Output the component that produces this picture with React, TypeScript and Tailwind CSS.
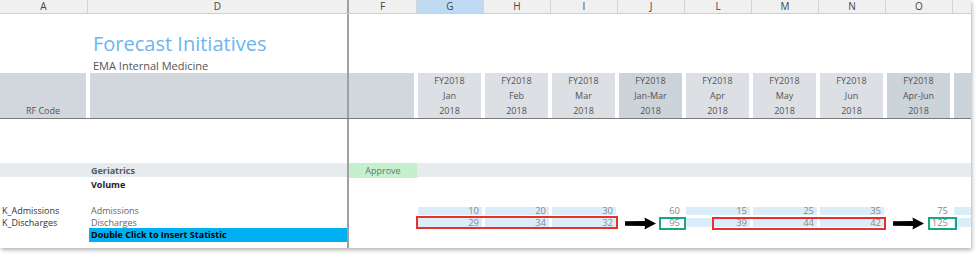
import React from "react";

const GRID = "grid grid-cols-[88px_261px_68px_repeat(8,67px)_18px]";

const periods = [
  { col: "G", label: "Jan", quarter: false, adm: 10, dis: 29 },
  { col: "H", label: "Feb", quarter: false, adm: 20, dis: 34 },
  { col: "I", label: "Mar", quarter: false, adm: 30, dis: 32 },
  { col: "J", label: "Jan-Mar", quarter: true, adm: 60, dis: 95 },
  { col: "L", label: "Apr", quarter: false, adm: 15, dis: 39 },
  { col: "M", label: "May", quarter: false, adm: 25, dis: 44 },
  { col: "N", label: "Jun", quarter: false, adm: 35, dis: 42 },
  { col: "O", label: "Apr-Jun", quarter: true, adm: 75, dis: 125 },
];

function Arrow({ className }: { className: string }) {
  return (
    <svg className={className} width="31" height="13" viewBox="0 0 31 13">
      <path d="M0 4.3 L20 4 L19.5 0.5 L31 6.5 L19.5 12.5 L20 9 L0 8.7 Z" fill="#000" />
    </svg>
  );
}

function ValueCell({ value, fill, h }: { value: number; fill: boolean; h: string }) {
  return (
    <div className="pl-px pr-[2px]">
      <div className={`${h} mt-[2px] text-right pr-[3px] text-[9.5px] text-[#8a8a8a] ${fill ? "bg-[#dcedfa]" : ""}`}>
        {value}
      </div>
    </div>
  );
}

export default function App() {
  return (
    <div className="w-[979px] h-[256px] bg-white font-['Open_Sans',sans-serif] text-[9px]">
      <div className="w-[971px] h-[248px] bg-white overflow-hidden shadow-[1px_2px_4px_rgba(0,0,0,0.3)]">
        {/* column letters */}
        <div className={`${GRID} h-[14px] bg-[#f0f0f0] border-b border-[#cfcfcf] text-[10px] leading-[13px] text-[#444] text-center`}>
          <div className="border-r border-[#d4d4d4]">A</div>
          <div className="border-r-2 border-[#a0a0a0]">D</div>
          <div className="border-r border-[#d4d4d4]">F</div>
          {periods.map((p) => (
            <div
              key={p.col}
              className={`border-r border-[#d4d4d4] ${p.col === "G" ? "bg-[#bedbf3]" : ""}`}
            >
              {p.col}
            </div>
          ))}
          <div />
        </div>

        {/* title */}
        <div className={`${GRID} h-[58px]`}>
          <div />
          <div className="border-r-2 border-[#a0a0a0] pl-[5px] pt-[20px]">
            <div className="text-[20px] leading-[20px] text-[#6db5f0]">Forecast Initiatives</div>
            <div className="mt-[6px] text-[11px] leading-[11px] text-[#555]">EMA Internal Medicine</div>
          </div>
          <div />
        </div>

        {/* header block */}
        <div className={`${GRID} h-[47px] border-b border-[#7a7a7a] text-[#555] leading-[15px] text-center`}>
          <div className="pr-[2px] pt-px">
            <div className="h-full bg-[#d1d7dc] flex flex-col justify-end">RF Code</div>
          </div>
          <div className="border-r-2 border-[#a0a0a0] pl-[2px] pt-px">
            <div className="h-full bg-[#d1d7dc]" />
          </div>
          <div className="pr-[3px] pt-px">
            <div className="h-full bg-[#d1d7dc]" />
          </div>
          {periods.map((p) => (
            <div key={p.col} className="pl-px pr-[3px] pt-px">
              <div className={`h-full flex flex-col ${p.quarter ? "bg-[#ccd3d9]" : "bg-[#dce0e4]"}`}>
                <span>FY2018</span>
                <span>{p.label}</span>
                <span>2018</span>
              </div>
            </div>
          ))}
          <div className="pl-px pt-px">
            <div className="h-full bg-[#ccd3d9]" />
          </div>
        </div>

        <div className={`${GRID} h-[44px]`}>
          <div />
          <div className="border-r-2 border-[#a0a0a0]" />
        </div>

        {/* Geriatrics */}
        <div className={`${GRID} h-[14px] leading-[15px] bg-[#e8ebee]`}>
          <div />
          <div className="border-r-2 border-[#a0a0a0] pl-[3px] font-bold text-[#4f5c69]">Geriatrics</div>
          <div className="bg-[#c6efce] text-center text-[#5f7d68]">Approve</div>
        </div>

        {/* Volume */}
        <div className={`${GRID} h-[14px] leading-[15px]`}>
          <div />
          <div className="border-r-2 border-[#a0a0a0] pl-[3px] font-bold text-[#222]">Volume</div>
        </div>

        <div className={`${GRID} h-[14px]`}>
          <div />
          <div className="border-r-2 border-[#a0a0a0]" />
        </div>

        {/* Admissions */}
        <div className={`${GRID} h-[11px] leading-[8px]`}>
          <div className="pl-[2px] pt-[2px] text-[#333]">K_Admissions</div>
          <div className="border-r-2 border-[#a0a0a0] pl-[3px] pt-[2px] text-[#666]">Admissions</div>
          <div />
          {periods.map((p) => (
            <ValueCell key={p.col} value={p.adm} fill={!p.quarter} h="h-[8px]" />
          ))}
          <div className="pl-px">
            <div className="h-[8px] mt-[2px] bg-[#dcedfa]" />
          </div>
        </div>

        {/* Discharges */}
        <div className={`${GRID} relative h-[12px] leading-[9px]`}>
          <div className="pl-[2px] pt-[2px] text-[#333]">K_Discharges</div>
          <div className="border-r-2 border-[#a0a0a0] pl-[3px] pt-[2px] text-[#666]">Discharges</div>
          <div />
          {periods.map((p) => (
            <ValueCell key={p.col} value={p.dis} fill={!p.quarter} h="h-[9px]" />
          ))}
          <div className="pl-px">
            <div className="h-[9px] mt-[2px] bg-[#dcedfa]" />
          </div>

          <div className="absolute left-[416px] top-0 w-[202px] h-[13px] border-2 border-[#e8312c]" />
          <Arrow className="absolute left-[625px] top-px" />
          <div className="absolute left-[659px] top-[1px] w-[27px] h-[13px] border-2 border-[#1aa583]" />
          <div className="absolute left-[712px] top-[1px] w-[174px] h-[13px] border-2 border-[#e8312c]" />
          <Arrow className="absolute left-[892px] top-px w-[33px]" />
          <div className="absolute left-[928px] top-[1px] w-[29px] h-[13px] border-2 border-[#1aa583]" />
        </div>

        {/* Double click */}
        <div className={`${GRID} h-[14px] leading-[14px]`}>
          <div />
          <div className="border-r-2 border-[#a0a0a0] pl-px">
            <div className="h-full bg-[#00b0f0] pl-[2px] font-bold text-black">Double Click to Insert Statistic</div>
          </div>
        </div>

        <div className={`${GRID} h-[6px]`}>
          <div />
          <div className="border-r-2 border-[#a0a0a0]" />
        </div>
      </div>
    </div>
  );
}
